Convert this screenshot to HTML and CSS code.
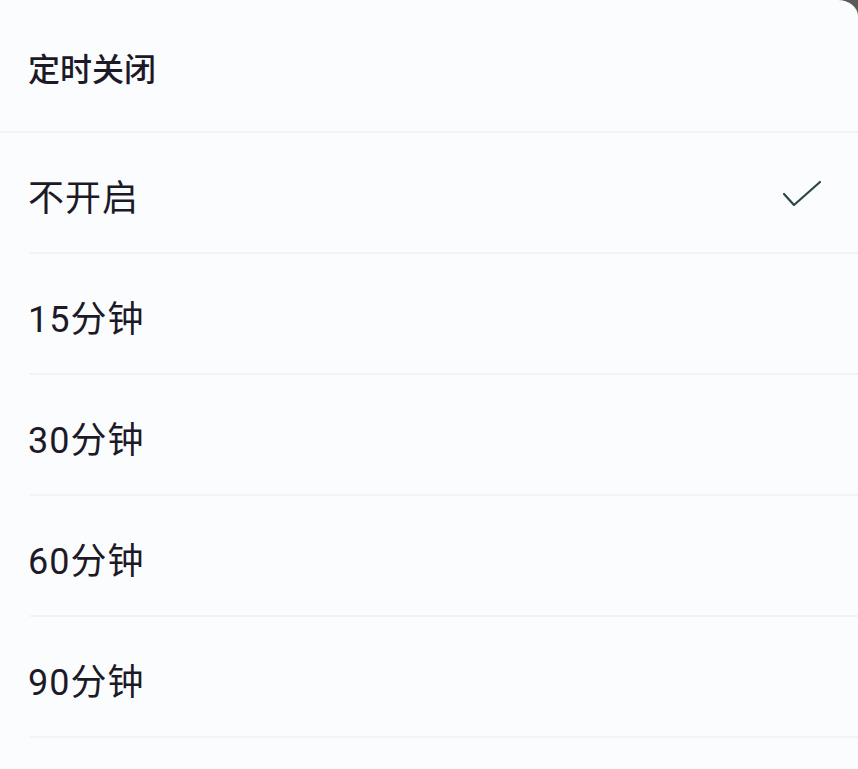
FILE: index.html
```html
<!DOCTYPE html>
<html lang="zh-CN">
<head>
    <meta charset="UTF-8">
    <meta name="viewport" content="width=device-width, initial-scale=1.0">
    <title>定时关闭</title>
    <link rel="stylesheet" href="styles.css">
</head>
<body>
    <div class="sheet">
        <div class="sheet-title">定时关闭</div>
        <ul class="option-list">
            <li class="option selected">
                <span>不开启</span>
                <svg class="check" width="40" height="28" viewBox="0 0 40 28">
                    <path d="M2 14 L12 25 L38 2" fill="none" stroke="#2b4448" stroke-width="2.2" stroke-linecap="round" stroke-linejoin="round"/>
                </svg>
            </li>
            <li class="option"><span>15分钟</span></li>
            <li class="option"><span>30分钟</span></li>
            <li class="option"><span>60分钟</span></li>
            <li class="option"><span>90分钟</span></li>
        </ul>
    </div>
</body>
</html>
```

FILE: styles.css
```css
body {
    margin: 0;
    padding: 0;
    background-color: #5b5857;
    font-family: Roboto, "Noto Sans CJK SC", sans-serif;
    color: #1d1a27;
    overflow: hidden;
}
.sheet {
    background-color: #fbfcfe;
    width: 858px;
    height: 769px;
    border-top-right-radius: 20px 16px;
}
.sheet-title {
    height: 133px;
    display: flex;
    align-items: center;
    padding-left: 28px;
    font-size: 32px;
    font-weight: 500;
    border-bottom: 2px solid #f1f3f6;
    box-sizing: border-box;
    padding-top: 2px;
}
.option-list {
    list-style: none;
    margin: 0;
    padding: 0;
}
.option {
    height: 121px;
    margin-left: 30px;
    padding-right: 36px;
    display: flex;
    align-items: center;
    justify-content: space-between;
    font-size: 36px;
    letter-spacing: 1px;
    border-bottom: 2px solid #f1f3f6;
    box-sizing: border-box;
}
.option span {
    margin-left: -2px;
    margin-top: 4px;
}
.check {
    display: block;
    margin-top: 2px;
}
```
